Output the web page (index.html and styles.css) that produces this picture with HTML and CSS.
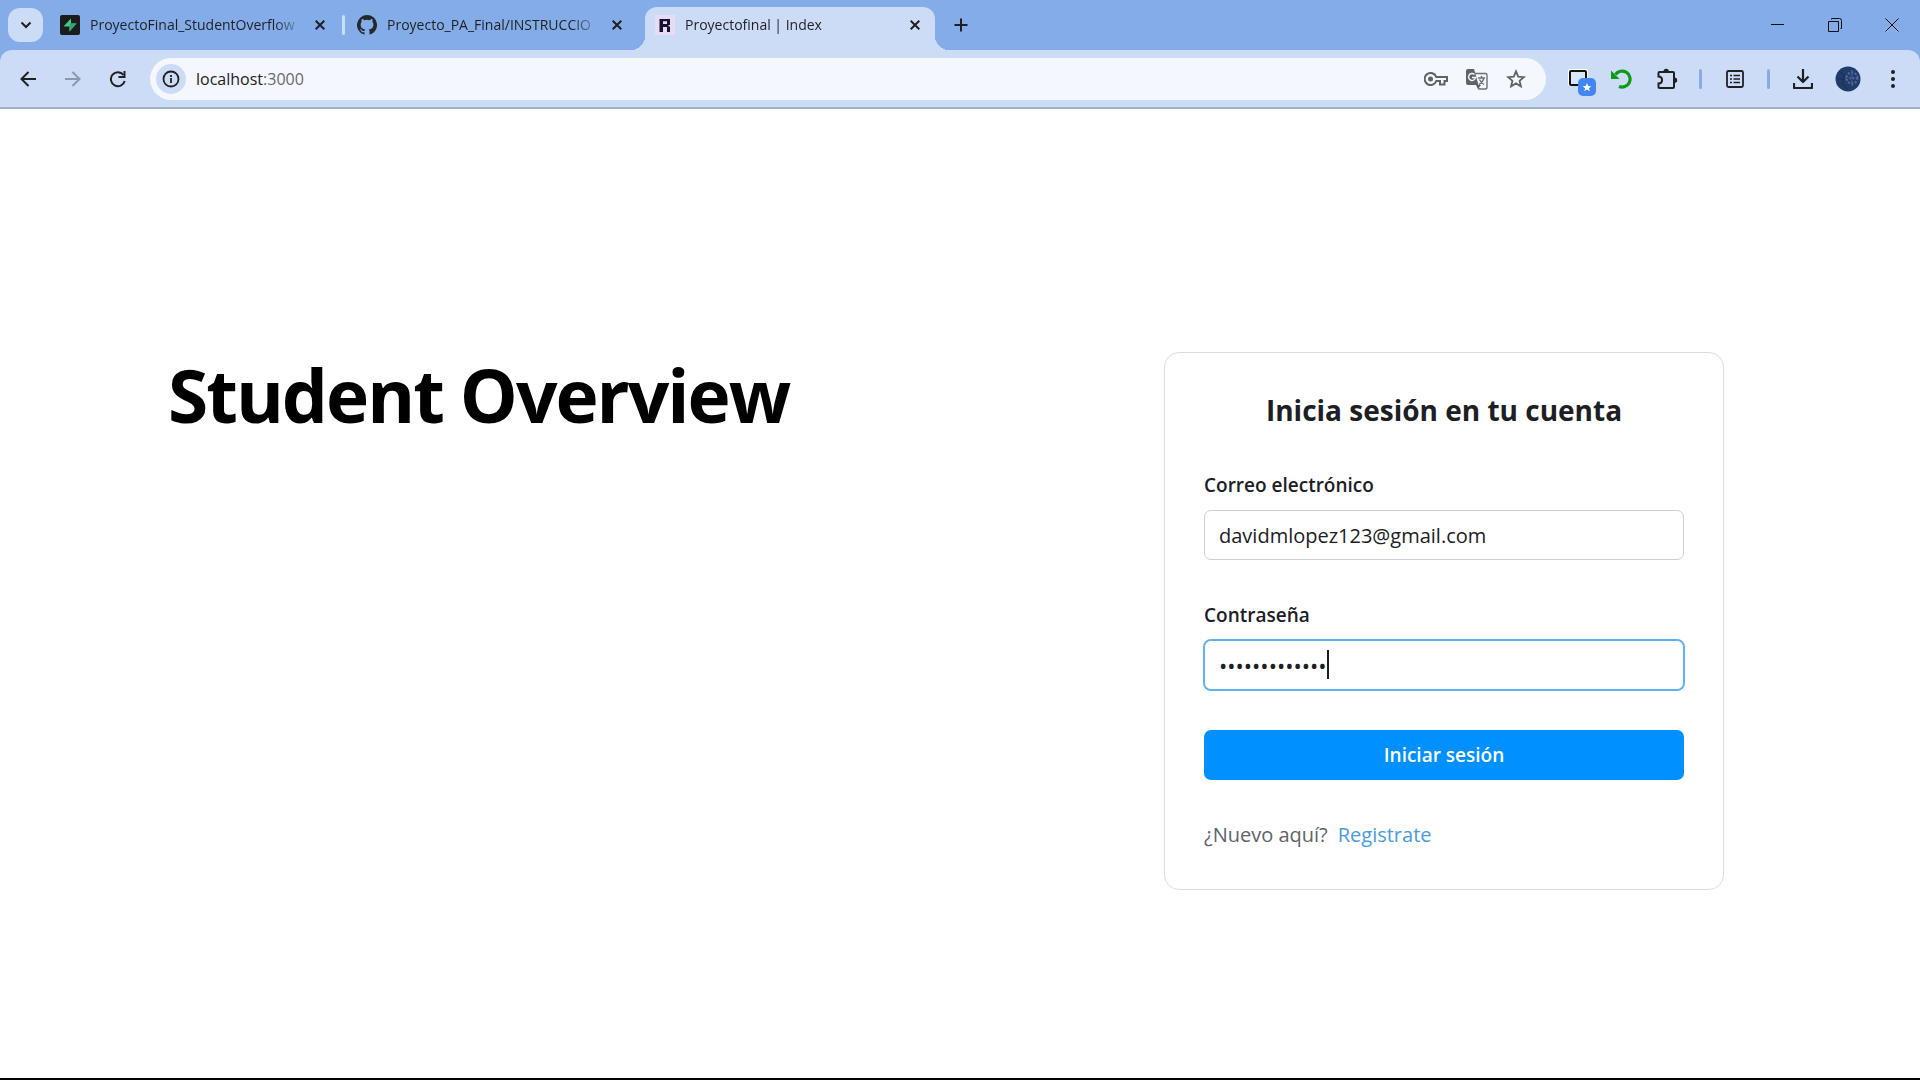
FILE: index.html
```html
<!DOCTYPE html>
<html lang="es">
<head>
<meta charset="utf-8">
<meta name="viewport" content="width=device-width, initial-scale=1">
<title>Proyectofinal | Index</title>
<link rel="stylesheet" href="styles.css">
</head>
<body>
<header class="browser">
  <div class="tabstrip">
    <button class="tab-search" aria-label="Buscar pestañas"><svg width="12" height="8" viewBox="0 0 12 8"><path d="M1.500 1.500 6 6l4.500-4.500" fill="none" stroke="#1f2023" stroke-width="2"/></svg></button>
    <div class="tab">
      <svg class="favicon" viewBox="0 0 20 20"><rect width="20" height="20" rx="2" fill="#1c1c1c"/><path d="M11 3.500v5h5.500L9.500 16.500v-5H3.500z" fill="#3ecf8e"/><path d="M9.500 8.500h7L9.500 16.500z" fill="#2fa874"/></svg>
      <span class="tab-title">ProyectoFinal_StudentOverflow</span>
      <button class="tab-close" aria-label="Cerrar"><svg width="10" height="10" viewBox="0 0 10 10"><path d="m.7.7 8.600 8.600M9.300.7.7 9.300"/></svg></button>
    </div>
    <span class="tab-divider"></span>
    <div class="tab">
      <svg class="favicon" viewBox="0 0 16 16"><path fill="#24292f" d="M8 0a8 8 0 0 0-2.530 15.590c.4.070.55-.17.55-.38l-.01-1.490c-2.010.37-2.530-.49-2.690-.94-.09-.23-.48-.94-.82-1.130-.28-.15-.68-.52-.01-.53.63-.01 1.080.58 1.230.82.72 1.210 1.870.87 2.330.66.07-.52.28-.87.51-1.070-1.780-.2-3.640-.89-3.640-3.950 0-.87.310-1.590.82-2.150-.08-.2-.36-1.020.08-2.120 0 0 .67-.21 2.200.82a7.600 7.600 0 0 1 4 0c1.530-1.040 2.200-.82 2.200-.82.44 1.100.16 1.920.08 2.120.51.56.82 1.270.82 2.150 0 3.070-1.870 3.750-3.650 3.950.29.25.54.73.54 1.480l-.01 2.200c0 .21.15.46.55.38A8 8 0 0 0 8 0z"/></svg>
      <span class="tab-title">Proyecto_PA_Final/INSTRUCCIO</span>
      <button class="tab-close" aria-label="Cerrar"><svg width="10" height="10" viewBox="0 0 10 10"><path d="m.7.7 8.600 8.600M9.300.7.7 9.300"/></svg></button>
    </div>
    <div class="tab tab-active">
      <svg class="favicon" viewBox="0 0 20 20"><rect width="20" height="20" fill="#e6dcf3"/><path d="M4.500 4H15v6h-1.500v1.500H15V17h-3v-5H8v5H4.500zM8 6.200V9h4V6.200z" fill="#1a1035" fill-rule="evenodd"/></svg>
      <span class="tab-title">Proyectofinal | Index</span>
      <button class="tab-close" aria-label="Cerrar"><svg width="10" height="10" viewBox="0 0 10 10"><path d="m.7.7 8.600 8.600M9.300.7.7 9.300"/></svg></button>
    </div>
    <button class="new-tab" aria-label="Nueva pestaña"><svg width="14" height="14" viewBox="0 0 14 14"><path d="M7 .5v13M.5 7h13" stroke="#1f2023" stroke-width="2"/></svg></button>
    <div class="window-controls">
      <button aria-label="Minimizar"><svg width="14" height="14" viewBox="0 0 14 14"><path d="M0 6.500h13"/></svg></button>
      <button aria-label="Restaurar"><svg width="14" height="14" viewBox="0 0 14 14"><path d="M.5 3.500h10v10H.5zM3.500 1.500V.5h8q2 0 2 2v8h-1"/></svg></button>
      <button aria-label="Cerrar ventana"><svg width="14" height="14" viewBox="0 0 14 14"><path d="m.5.500 13 13M13.500.5l-13 13"/></svg></button>
    </div>
  </div>
  <div class="toolbar">
    <nav class="nav-buttons">
      <button aria-label="Atrás"><svg width="16" height="16" viewBox="0 0 16 16"><path d="M8.500 1 1.500 8l7 7M1.500 8H16" fill="none" stroke="#1f2023" stroke-width="2"/></svg></button>
      <button aria-label="Adelante"><svg width="16" height="16" viewBox="0 0 16 16"><path d="m7.500 1 7 7-7 7M14.500 8H0" fill="none" stroke="#8b98ad" stroke-width="2"/></svg></button>
      <button aria-label="Recargar"><svg width="18" height="18" viewBox="0 0 18 18"><path d="M14.500 5A7 7 0 1 0 15.700 11" fill="none" stroke="#1f2023" stroke-width="2"/><path d="M16.500 1v7h-7V6h5V1z" fill="#1f2023"/></svg></button>
    </nav>
    <div class="omnibox">
      <span class="site-info"><svg width="18" height="18" viewBox="0 0 18 18"><circle cx="9" cy="9" r="7.500" fill="none" stroke="#1f2023" stroke-width="1.800"/><path d="M9 8v5M9 5v2" stroke="#1f2023" stroke-width="1.800"/></svg></span>
      <span class="url">localhost<span class="port">:3000</span></span>
      <span class="omni-icons">
        <svg width="24" height="14" viewBox="0 0 24 14"><path d="M12.300 5A6 6 0 1 0 12.300 9H16v3.500h4.500V9H23V5z" fill="none" stroke="#5f6368" stroke-width="2"/><circle cx="6.500" cy="7" r="2.500" fill="#5f6368"/></svg>
        <svg width="22" height="22" viewBox="0 0 22 22"><path d="M9 5.500h10.500q1.500 0 1.500 1.500v12.500q0 1.500-1.500 1.500H13l-2-4" fill="none" stroke="#6d7074" stroke-width="1.400"/><path d="M2 1h6l4.500 16H2q-2 0-2-2V3q0-2 2-2z" fill="#5f6368"/><path d="m10 17 2 4 3-4z" fill="#5f6368"/><path d="M8.500 6.500A3.500 3.500 0 1 0 9.500 9.500H6" fill="none" stroke="#f4f7fd" stroke-width="1.400"/><path d="M12 10h7M15.500 8v2M18 10q-1 4-5 6.500M13.500 11.500q1.500 3.500 4.500 5" fill="none" stroke="#6d7074" stroke-width="1.300"/></svg>
        <svg width="20" height="20" viewBox="0 0 20 20"><path d="m10 2.300 2.200 5.300 5.700.5-4.300 3.700 1.300 5.600-4.900-3-4.900 3 1.300-5.600-4.300-3.700 5.700-.5z" fill="none" stroke="#5f6368" stroke-width="1.800"/></svg>
      </span>
    </div>
    <div class="extensions">
      <button class="capture" aria-label="Capturas"><svg width="28" height="36" viewBox="0 -8 28 36"><rect x="0" y="0" width="20" height="17" rx="2" fill="#fff"/><rect x="2" y="2" width="16" height="14" rx="1" fill="#d9e5f9" stroke="#111" stroke-width="2"/><rect x="10" y="9" width="18" height="18" rx="5" fill="#4285f4"/><path d="m19 14 1.200 3 3.200.2-2.500 2 .9 3.100-2.800-1.700-2.800 1.700.9-3.100-2.500-2 3.200-.2z" fill="#fff"/></svg></button>
      <button aria-label="Deshacer"><svg width="21" height="20" viewBox="0 0 21 20"><path d="M4.500 5.500A8 8 0 1 1 8 17.500" fill="none" stroke="#0a9a17" stroke-width="3.200"/><path d="M0 1.500V10h8.500z" fill="#0a9a17"/></svg></button>
      <button aria-label="Extensiones"><svg width="22" height="22" viewBox="0 0 22 22"><path d="M3.500 4H17q1 0 1 1v14q0 1-1 1H3.500q-1 0-1-1v-3.500q3.500 0 3.500-3.500t-3.500-3.500V5q0-1 1-1z" fill="none" stroke="#1f2023" stroke-width="2"/><path d="M7.500 3.500a2.700 2.700 0 0 1 5.400 0zM18.500 9.500a2.700 2.700 0 0 1 0 5.400z" fill="#1f2023"/></svg></button>
      <span class="bar"></span>
      <button aria-label="Modo de lectura"><svg width="20" height="20" viewBox="0 0 20 20"><rect x="2" y="2" width="16" height="16" rx="1.500" fill="none" stroke="#1f2023" stroke-width="1.800"/><path d="M5 6.500h2M5 10h2M5 13.500h2M8.500 6.500H15M8.500 10H15M8.500 13.500H15" stroke="#1f2023" stroke-width="1.600"/></svg></button>
      <span class="bar"></span>
      <button aria-label="Descargas"><svg width="20" height="20" viewBox="0 0 20 20"><path d="M10 0v12M4.500 7.500 10 13l5.500-5.500M1 14v5h18v-5" fill="none" stroke="#1f2023" stroke-width="2.200" stroke-linejoin="round"/></svg></button>
      <button aria-label="Perfil"><svg width="26" height="26" viewBox="0 0 26 26"><circle cx="13" cy="13" r="12.500" fill="#203c68"/><path d="M2 13h10M5 6l4 3-2 9 6 5" fill="none" stroke="#17305a"/><g fill="none" stroke="#5a69a2" stroke-dasharray="2 1.500"><circle cx="17" cy="12" r="5.500" stroke-width="2"/><circle cx="17" cy="12" r="2"/><path d="M17 4v16M10 12h14"/></g></svg></button>
      <button aria-label="Menú"><svg width="4" height="18" viewBox="0 0 4 18"><g fill="#1f2023"><circle cx="2" cy="2" r="2"/><circle cx="2" cy="9" r="2"/><circle cx="2" cy="16" r="2"/></g></svg></button>
    </div>
  </div>
</header>
<main class="page">
  <h1 class="hero">Student Overview</h1>
  <form class="card">
    <h2 class="card-title">Inicia sesión en tu cuenta</h2>
    <div class="field">
      <label for="email">Correo electrónico</label>
      <input id="email" type="email" value="davidmlopez123@gmail.com">
    </div>
    <div class="field">
      <label for="password">Contraseña</label>
      <div class="password-box">
        <input id="password" class="focused" type="password" value="1234567890123">
        <span class="caret"></span>
      </div>
    </div>
    <button class="submit" type="button">Iniciar sesión</button>
    <p class="signup"><span>¿Nuevo aquí?</span><a href="#">Registrate</a></p>
  </form>
</main>
</body>
</html>
```
FILE: styles.css
```css
* { box-sizing: border-box; }
body {
  margin: 0;
  min-height: 100vh;
  display: flex;
  flex-direction: column;
  background: #fff;
  border-bottom: 2px solid #000;
  font-family: "Open Sans", "Noto Sans", sans-serif;
  color: #1c2024;
}
button { border: 0; padding: 0; background: none; font: inherit; color: inherit; }
svg { display: block; flex: none; }

/* Browser chrome */
.browser { background: #84ace9; }
.tabstrip { display: flex; align-items: center; height: 50px; padding-left: 8px; }
.tab-search {
  display: grid;
  place-items: center;
  width: 35px;
  height: 34px;
  border-radius: 12px;
  background: #ccdcf6;
}
.tab { display: flex; align-items: center; gap: 10px; width: 290px; height: 43px; padding: 0 14px 0 10px; }
.tab-search + .tab { margin-left: 7px; }
.favicon { width: 20px; height: 20px; }
.tab-title {
  flex: 1;
  min-width: 0;
  overflow: hidden;
  white-space: nowrap;
  font-size: 14px;
  line-height: 20px;
  color: #1f2023;
  mask-image: linear-gradient(to right, #000 86%, transparent);
}
.tab-close { display: grid; place-items: center; width: 12px; height: 20px; }
.tab-close path { stroke: #1f2023; stroke-width: 2; }
.tab-divider { width: 3px; height: 20px; margin: 0 2px; border-radius: 2px; background: #ccdcf6; }
.tab-active {
  position: relative;
  align-self: flex-end;
  margin-left: 8px;
  padding-bottom: 7px;
  border-radius: 12px 12px 0 0;
  background: #ccdcf6;
}
.tab-active::before, .tab-active::after {
  content: "";
  position: absolute;
  bottom: 0;
  width: 14px;
  height: 14px;
}
.tab-active::before { right: 100%; background: radial-gradient(circle at 0 0, transparent 14px, #ccdcf6 14px); }
.tab-active::after { left: 100%; background: radial-gradient(circle at 100% 0, transparent 14px, #ccdcf6 14px); }
.new-tab { display: grid; place-items: center; width: 34px; height: 34px; margin-left: 9px; }
.window-controls { display: flex; margin-left: auto; }
.window-controls button { display: grid; place-items: center; width: 57px; height: 48px; }
.window-controls path { fill: none; stroke: #111; }

.toolbar {
  display: flex;
  align-items: center;
  height: 59px;
  border-bottom: 2px solid #a0b1cf;
  border-radius: 12px 12px 0 0;
  background: #ccdcf6;
}
.nav-buttons { display: flex; padding: 0 10px 0 5px; }
.nav-buttons button { display: grid; place-items: center; width: 45px; height: 36px; }
.omnibox {
  flex: 1;
  display: flex;
  align-items: center;
  height: 42px;
  padding: 0 20px 0 6px;
  border-radius: 21px;
  background: #f4f7fd;
}
.site-info { display: grid; place-items: center; width: 30px; height: 30px; border-radius: 50%; background: #ccdcf6; }
.url { flex: 1; margin-left: 10px; font-size: 16px; line-height: 24px; color: #1f2023; }
.port { color: #676a6e; }
.omni-icons { display: flex; align-items: center; gap: 18px; }
.extensions { display: flex; align-items: center; padding-left: 18px; padding-right: 5px; }
.extensions button { display: grid; place-items: center; width: 45px; height: 36px; }
.extensions .capture { width: 35px; }
.bar { width: 3px; height: 20px; margin: 0 10px; border-radius: 2px; background: #84ace9; }

/* Login page */
.page {
  flex: 1;
  display: flex;
  justify-content: space-between;
  align-items: flex-start;
  padding: 243px 196px 80px 168px;
}
.hero { margin: 0; font-size: 73px; font-weight: 700; line-height: 86px; letter-spacing: -2px; color: #000; }
.card {
  display: flex;
  flex-direction: column;
  width: 560px;
  padding: 39px;
  border: 1px solid #dddde3;
  border-radius: 15px;
  background: #fff;
}
.card-title { margin: 0 0 42px; font-size: 28px; font-weight: 700; line-height: 36px; text-align: center; }
.field { display: flex; flex-direction: column; gap: 10px; margin-bottom: 40px; font-size: 20px; line-height: 30px; }
.field label { font-size: 19px; font-weight: 600; }
.field input {
  width: 100%;
  height: 50px;
  padding: 0 14px;
  border: 1px solid #cdced6;
  border-radius: 7px;
  outline: 0;
  background: #fff;
  font: inherit;
  color: #1c2024;
}
.password-box { position: relative; display: flex; }
.field .focused { border-color: #5eb1ef; box-shadow: 0 0 0 1px #5eb1ef; font-size: 22px; }
.caret { position: absolute; left: 123px; top: 10px; width: 2px; height: 29px; background: #1c2024; }
.submit { height: 50px; border-radius: 7px; background: #0090ff; color: #fff; font-size: 19px; font-weight: 600; }
.signup { display: flex; gap: 10px; margin: 40px 0 0; font-size: 20px; line-height: 30px; color: #606468; }
.signup a { color: #4a9ae0; text-decoration: none; }
```
